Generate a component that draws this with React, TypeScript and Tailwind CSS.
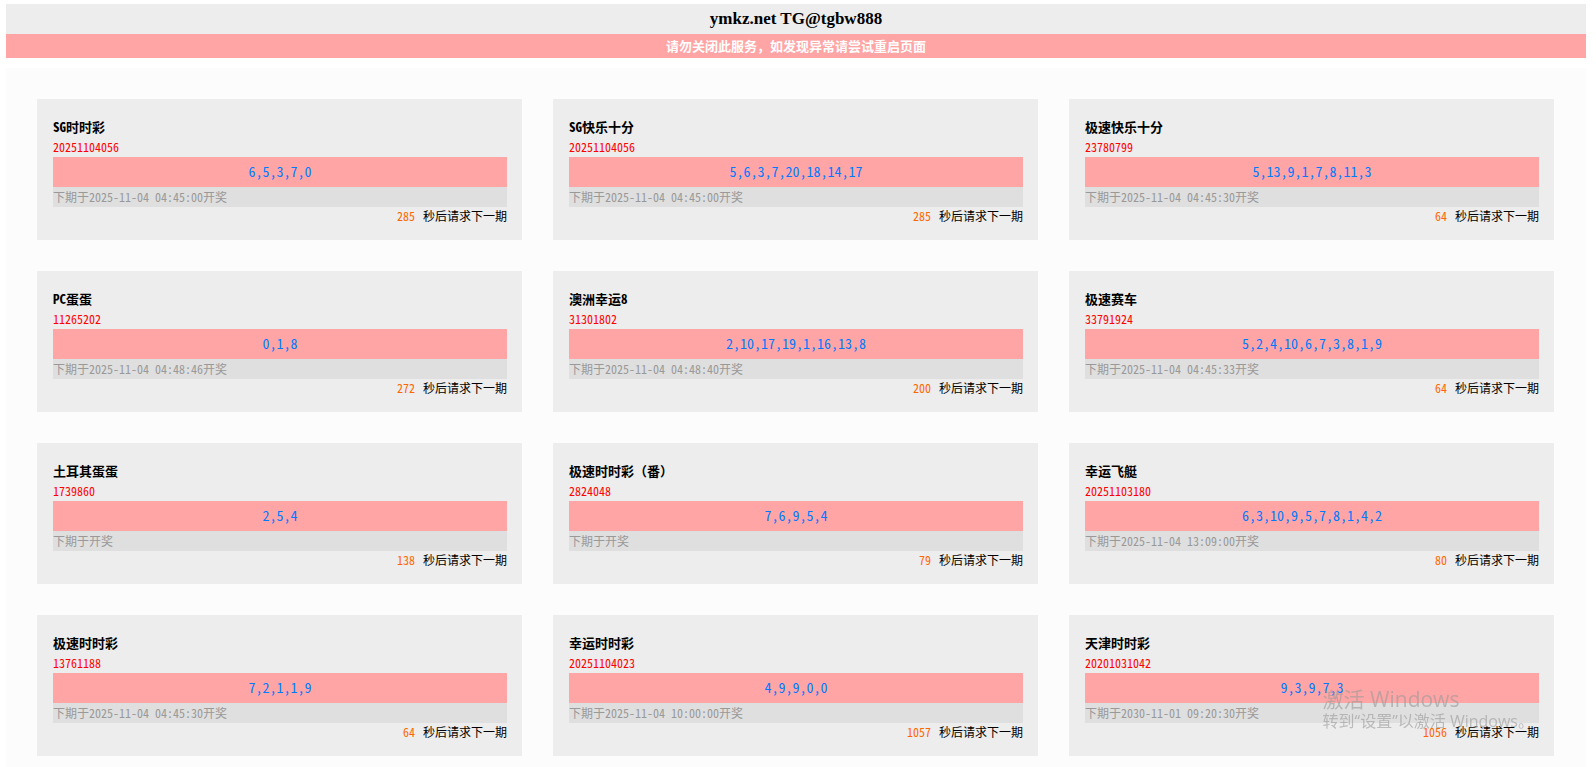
type Lottery = {
  name: string;
  tag?: string;
  issue: string;
  numbers: string;
  next: string;
  seconds: number;
};

const lotteries: Lottery[] = [
  { name: "SG时时彩", issue: "20251104056", numbers: "6,5,3,7,0", next: "2025-11-04 04:45:00", seconds: 285 },
  { name: "SG快乐十分", issue: "20251104056", numbers: "5,6,3,7,20,18,14,17", next: "2025-11-04 04:45:00", seconds: 285 },
  { name: "极速快乐十分", issue: "23780799", numbers: "5,13,9,1,7,8,11,3", next: "2025-11-04 04:45:30", seconds: 64 },
  { name: "PC蛋蛋", issue: "11265202", numbers: "0,1,8", next: "2025-11-04 04:48:46", seconds: 272 },
  { name: "澳洲幸运8", issue: "31301802", numbers: "2,10,17,19,1,16,13,8", next: "2025-11-04 04:48:40", seconds: 200 },
  { name: "极速赛车", issue: "33791924", numbers: "5,2,4,10,6,7,3,8,1,9", next: "2025-11-04 04:45:33", seconds: 64 },
  { name: "土耳其蛋蛋", issue: "1739860", numbers: "2,5,4", next: "", seconds: 138 },
  { name: "极速时时彩", tag: "（番）", issue: "2824048", numbers: "7,6,9,5,4", next: "", seconds: 79 },
  { name: "幸运飞艇", issue: "20251103180", numbers: "6,3,10,9,5,7,8,1,4,2", next: "2025-11-04 13:09:00", seconds: 80 },
  { name: "极速时时彩", issue: "13761188", numbers: "7,2,1,1,9", next: "2025-11-04 04:45:30", seconds: 64 },
  { name: "幸运时时彩", issue: "20251104023", numbers: "4,9,9,0,0", next: "2025-11-04 10:00:00", seconds: 1057 },
  { name: "天津时时彩", issue: "20201031042", numbers: "9,3,9,7,3", next: "2030-11-01 09:20:30", seconds: 1056 },
];

function LotteryCard({ item }: { item: Lottery }) {
  return (
    <section className="bg-[#ededed] pt-4 pr-[15px] pb-[15px] pl-4 text-[12px] leading-[18px] [font-feature-settings:'hwid']">
      <h2 className="text-[13px] leading-6 font-bold">
        {item.name}
        {item.tag && <span className="[font-feature-settings:normal]">{item.tag}</span>}
      </h2>
      <div className="pb-[2px] leading-4 text-[#ff0000]">{item.issue}</div>
      <div className="bg-[#ffa5a5] pb-[2px] text-center text-[14px] leading-7 text-[#007bff]">{item.numbers}</div>
      <div className="bg-[#dfdfdf] leading-5 text-[#999999]">下期于{item.next}开奖</div>
      <div className="flex justify-end gap-2">
        <span className="text-[#ff6600]">{item.seconds}</span>
        <span>秒后请求下一期</span>
      </div>
    </section>
  );
}

export default function App() {
  return (
    <div className="min-h-screen bg-white pt-1 pr-[10px] pl-[6px] text-black font-['Noto_Sans_CJK_SC',sans-serif]">
      <header className="text-center font-bold">
        <h1 className="bg-[#ededed] text-[17px] leading-[30px] font-['Liberation_Serif',serif]">
          ymkz.net TG@tgbw888
        </h1>
        <p className="bg-[#ffa5a5] text-[13px] leading-6 text-white">
          请勿关闭此服务，如发现异常请尝试重启页面
        </p>
      </header>

      <main className="mt-[10px] grid grid-cols-3 gap-[31px] bg-[#fcfcfc] py-[31px] pr-8 pl-[31px]">
        {lotteries.map((item) => (
          <LotteryCard key={item.issue + item.name} item={item} />
        ))}
      </main>

      {/* Windows activation notice */}
      <div className="pointer-events-none fixed right-[62px] bottom-9 text-[#999999]/60 font-['Open_Sans','Noto_Sans_CJK_SC',sans-serif]">
        <div className="text-[21px] leading-6">激活 Windows</div>
        <div className="text-[16px] leading-5">转到“设置”以激活 Windows。</div>
      </div>
    </div>
  );
}
